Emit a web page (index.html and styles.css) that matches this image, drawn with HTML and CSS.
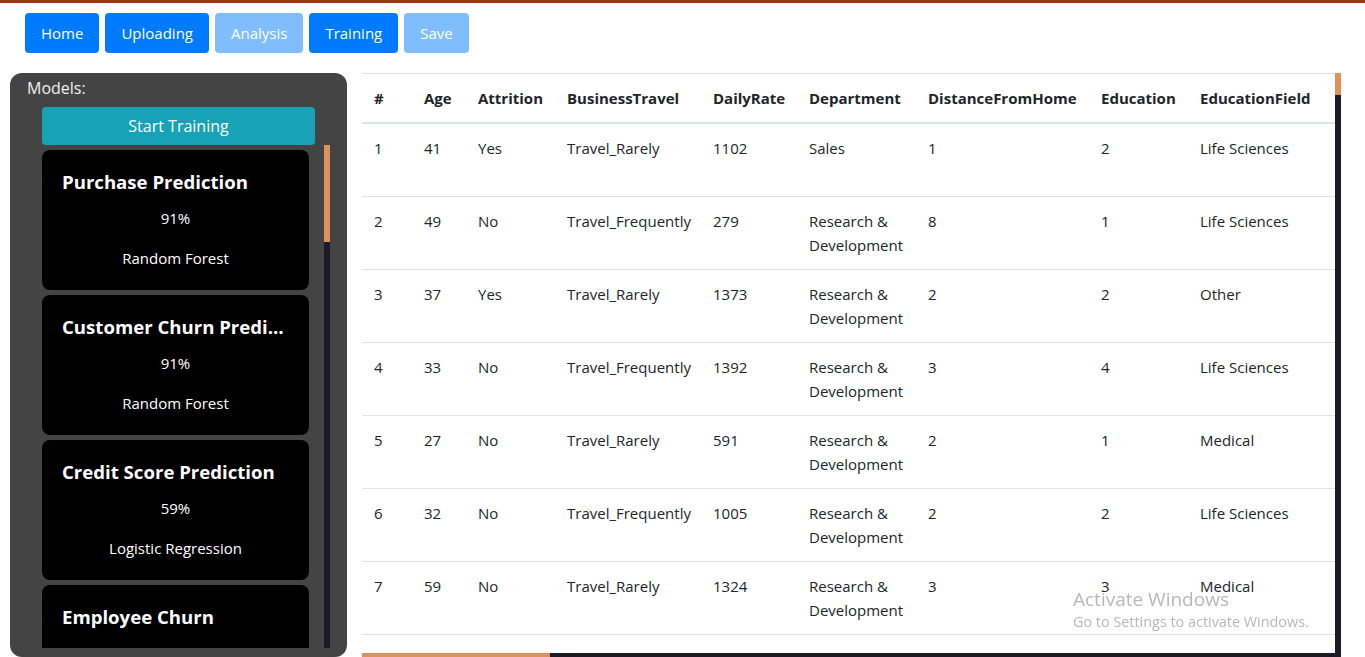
FILE: index.html
```html
<!DOCTYPE html>
<html lang="en">
<head>
<meta charset="utf-8">
<title>Training</title>
<link rel="stylesheet" href="styles.css">
</head>
<body>
<header class="topbar">
  <button class="nav-btn">Home</button>
  <button class="nav-btn">Uploading</button>
  <button class="nav-btn disabled">Analysis</button>
  <button class="nav-btn">Training</button>
  <button class="nav-btn disabled">Save</button>
</header>
<main class="main">
  <aside class="models-panel">
    <div class="models-label">Models:</div>
    <div class="models-inner">
      <button class="start-btn">Start Training</button>
      <div class="models-scroll">
        <div class="models-list">
          <div class="model-card"><h4 class="model-title">Purchase Prediction</h4><p class="model-acc">91%</p><p class="model-algo">Random Forest</p></div>
          <div class="model-card"><h4 class="model-title">Customer Churn Prediction</h4><p class="model-acc">91%</p><p class="model-algo">Random Forest</p></div>
          <div class="model-card"><h4 class="model-title">Credit Score Prediction</h4><p class="model-acc">59%</p><p class="model-algo">Logistic Regression</p></div>
          <div class="model-card"><h4 class="model-title">Employee Churn</h4><p class="model-acc">86%</p><p class="model-algo">Random Forest</p></div>
        </div>
        <div class="scroll-track v-track"><div class="scroll-thumb models-thumb"></div></div>
      </div>
    </div>
  </aside>
  <section class="table-area">
    <div class="table-viewport">
      <table class="data-table">
        <colgroup>
          <col class="w-num"><col class="w-age"><col class="w-attr"><col class="w-travel"><col class="w-rate"><col class="w-dept"><col class="w-dist"><col class="w-edu"><col class="w-field">
          <col><col><col><col><col><col><col><col class="w-role"><col><col><col><col><col><col><col><col><col><col><col><col><col><col><col><col><col><col><col><col>
        </colgroup>
        <thead>
          <tr>
            <th>#</th><th>Age</th><th>Attrition</th><th>BusinessTravel</th><th>DailyRate</th><th>Department</th><th>DistanceFromHome</th><th>Education</th><th>EducationField</th><th>EmployeeCount</th><th>EmployeeNumber</th><th>EnvironmentSatisfaction</th><th>Gender</th><th>HourlyRate</th><th>JobInvolvement</th><th>JobLevel</th><th>JobRole</th><th>JobSatisfaction</th><th>MaritalStatus</th><th>MonthlyIncome</th><th>MonthlyRate</th><th>NumCompaniesWorked</th><th>Over18</th><th>OverTime</th><th>PercentSalaryHike</th><th>PerformanceRating</th><th>RelationshipSatisfaction</th><th>StandardHours</th><th>StockOptionLevel</th><th>TotalWorkingYears</th><th>TrainingTimesLastYear</th><th>WorkLifeBalance</th><th>YearsAtCompany</th><th>YearsInCurrentRole</th><th>YearsSinceLastPromotion</th><th>YearsWithCurrManager</th>
          </tr>
        </thead>
        <tbody>
          <tr><td>1</td><td>41</td><td>Yes</td><td>Travel_Rarely</td><td>1102</td><td>Sales</td><td>1</td><td>2</td><td>Life Sciences</td><td>1</td><td>1</td><td>2</td><td>Female</td><td>94</td><td>3</td><td>2</td><td>Sales Executive</td><td>4</td><td>Single</td><td>5993</td><td>19479</td><td>8</td><td>Y</td><td>Yes</td><td>11</td><td>3</td><td>1</td><td>80</td><td>0</td><td>8</td><td>0</td><td>1</td><td>6</td><td>4</td><td>0</td><td>5</td></tr>
          <tr><td>2</td><td>49</td><td>No</td><td>Travel_Frequently</td><td>279</td><td>Research &amp; Development</td><td>8</td><td>1</td><td>Life Sciences</td><td>1</td><td>2</td><td>3</td><td>Male</td><td>61</td><td>2</td><td>2</td><td>Research Scientist</td><td>2</td><td>Married</td><td>5130</td><td>24907</td><td>1</td><td>Y</td><td>No</td><td>23</td><td>4</td><td>4</td><td>80</td><td>1</td><td>10</td><td>3</td><td>3</td><td>10</td><td>7</td><td>1</td><td>7</td></tr>
          <tr><td>3</td><td>37</td><td>Yes</td><td>Travel_Rarely</td><td>1373</td><td>Research &amp; Development</td><td>2</td><td>2</td><td>Other</td><td>1</td><td>4</td><td>4</td><td>Male</td><td>92</td><td>2</td><td>1</td><td>Laboratory Technician</td><td>3</td><td>Single</td><td>2090</td><td>2396</td><td>6</td><td>Y</td><td>Yes</td><td>15</td><td>3</td><td>2</td><td>80</td><td>0</td><td>7</td><td>3</td><td>3</td><td>0</td><td>0</td><td>0</td><td>0</td></tr>
          <tr><td>4</td><td>33</td><td>No</td><td>Travel_Frequently</td><td>1392</td><td>Research &amp; Development</td><td>3</td><td>4</td><td>Life Sciences</td><td>1</td><td>5</td><td>4</td><td>Female</td><td>56</td><td>3</td><td>1</td><td>Research Scientist</td><td>3</td><td>Married</td><td>2909</td><td>23159</td><td>1</td><td>Y</td><td>Yes</td><td>11</td><td>3</td><td>3</td><td>80</td><td>0</td><td>8</td><td>3</td><td>3</td><td>8</td><td>7</td><td>3</td><td>0</td></tr>
          <tr><td>5</td><td>27</td><td>No</td><td>Travel_Rarely</td><td>591</td><td>Research &amp; Development</td><td>2</td><td>1</td><td>Medical</td><td>1</td><td>7</td><td>1</td><td>Male</td><td>40</td><td>3</td><td>1</td><td>Laboratory Technician</td><td>2</td><td>Married</td><td>3468</td><td>16632</td><td>9</td><td>Y</td><td>No</td><td>12</td><td>3</td><td>4</td><td>80</td><td>1</td><td>6</td><td>3</td><td>3</td><td>2</td><td>2</td><td>2</td><td>2</td></tr>
          <tr><td>6</td><td>32</td><td>No</td><td>Travel_Frequently</td><td>1005</td><td>Research &amp; Development</td><td>2</td><td>2</td><td>Life Sciences</td><td>1</td><td>8</td><td>4</td><td>Male</td><td>79</td><td>3</td><td>1</td><td>Laboratory Technician</td><td>4</td><td>Single</td><td>3068</td><td>11864</td><td>0</td><td>Y</td><td>No</td><td>13</td><td>3</td><td>3</td><td>80</td><td>0</td><td>8</td><td>2</td><td>2</td><td>7</td><td>7</td><td>3</td><td>6</td></tr>
          <tr><td>7</td><td>59</td><td>No</td><td>Travel_Rarely</td><td>1324</td><td>Research &amp; Development</td><td>3</td><td>3</td><td>Medical</td><td>1</td><td>10</td><td>3</td><td>Female</td><td>81</td><td>4</td><td>1</td><td>Laboratory Technician</td><td>1</td><td>Married</td><td>2670</td><td>9964</td><td>4</td><td>Y</td><td>Yes</td><td>20</td><td>4</td><td>1</td><td>80</td><td>3</td><td>12</td><td>3</td><td>2</td><td>1</td><td>0</td><td>0</td><td>0</td></tr>
          <tr><td>8</td><td>30</td><td>No</td><td>Travel_Rarely</td><td>358</td><td>Research &amp; Development</td><td>24</td><td>1</td><td>Life Sciences</td><td>1</td><td>11</td><td>4</td><td>Male</td><td>67</td><td>3</td><td>1</td><td>Laboratory Technician</td><td>3</td><td>Divorced</td><td>2693</td><td>13335</td><td>1</td><td>Y</td><td>No</td><td>22</td><td>4</td><td>2</td><td>80</td><td>1</td><td>1</td><td>2</td><td>3</td><td>1</td><td>0</td><td>0</td><td>0</td></tr>
        </tbody>
      </table>
    </div>
    <div class="scroll-track v-track"><div class="scroll-thumb table-vthumb"></div></div>
    <div class="scroll-track h-track"><div class="scroll-thumb table-hthumb"></div></div>
    <div class="scroll-corner"></div>
  </section>
</main>
<div class="watermark">
  <div class="wm-title">Activate Windows</div>
  <div class="wm-sub">Go to Settings to activate Windows.</div>
</div>
</body>
</html>
```
FILE: styles.css
```css
* { box-sizing: border-box; }

html, body {
  margin: 0;
  height: 100%;
  overflow: hidden;
}

body {
  font-family: "Open Sans", "Noto Sans", Arial, sans-serif;
  font-size: 16px;
  line-height: 1.5;
  color: #212529;
  background: #fff;
  border-top: 3px solid #9f3410;
}

/* top navigation */
.topbar {
  display: flex;
  gap: 6px;
  padding: 10px 25px 0;
  height: 70px;
}

.nav-btn {
  font-family: inherit;
  font-size: 15px;
  line-height: 24px;
  height: 40px;
  padding: 8px 16px;
  border: 0;
  border-radius: 4px;
  background: #007bff;
  color: #fff;
}

.nav-btn.disabled {
  background: #80bdff;
}

/* main area */
.main {
  display: flex;
  gap: 15px;
  padding-left: 10px;
  padding-right: 24px;
  height: calc(100vh - 73px);
}

.models-panel {
  width: 337px;
  flex: none;
  background: #444444;
  border-radius: 12px;
  padding: 3px 17px 9px;
  display: flex;
  flex-direction: column;
  height: 584px;
}

.models-label {
  color: #f0f0f0;
  font-size: 16px;
  line-height: 24px;
}

.models-inner {
  padding-left: 15px;
  margin-top: 7px;
  flex: 1;
  min-height: 0;
  display: flex;
  flex-direction: column;
}

.start-btn {
  width: 273px;
  height: 38px;
  flex: none;
  border: 0;
  border-radius: 4px;
  background: #17a2b8;
  color: #fff;
  font-family: inherit;
  font-size: 16px;
}

.models-scroll {
  flex: 1;
  min-height: 0;
  display: flex;
  gap: 15px;
  width: 288px;
}

.models-list {
  width: 267px;
  flex: none;
  overflow: hidden;
}

.model-card {
  width: 267px;
  margin-top: 5px;
  background: #000;
  color: #fff;
  border-radius: 8px;
  padding: 20px;
  text-align: center;
}

.model-title {
  margin: 0 0 12px;
  font-size: 18.6px;
  line-height: 24px;
  font-weight: 700;
  text-align: left;
  white-space: nowrap;
  overflow: hidden;
  text-overflow: ellipsis;
}

.model-acc {
  margin: 0 0 16px;
  font-size: 15px;
  line-height: 24px;
}

.model-algo {
  margin: 0;
  font-size: 15px;
  line-height: 24px;
}

/* drawn scrollbars for the fixed scroll views */
.scroll-track {
  background: #1c1a27;
}

.v-track {
  width: 6px;
  flex: none;
}

.scroll-thumb {
  background: #de915b;
}

.models-thumb {
  height: 97px;
}

/* table */
.table-area {
  flex: 1;
  min-width: 0;
  height: 584px;
  display: grid;
  grid-template-columns: 1fr 6px;
  grid-template-rows: 1fr 4px;
}

.table-viewport {
  overflow: hidden;
  min-width: 0;
  min-height: 0;
}

.table-vthumb {
  height: 22px;
}

.h-track {
  height: 4px;
}

.table-hthumb {
  width: 188px;
  height: 4px;
}

.scroll-corner {
  background: #1c1a27;
}

.data-table {
  table-layout: fixed;
  width: 5040px;
  border-collapse: collapse;
  font-size: 15px;
}

.data-table th,
.data-table td {
  padding: 12px;
  line-height: 24px;
  text-align: left;
  vertical-align: top;
  border-top: 1px solid #dee2e6;
}

.data-table th {
  font-weight: 700;
  border-bottom: 2px solid #dee2e6;
  white-space: nowrap;
}

.w-num { width: 50px; }
.w-age { width: 54px; }
.w-attr { width: 89px; }
.w-travel { width: 146px; }
.w-rate { width: 96px; }
.w-dept { width: 119px; }
.w-dist { width: 173px; }
.w-edu { width: 99px; }
.w-field { width: 135px; }
.w-role { width: 110px; }

/* OS watermark */
.watermark {
  position: fixed;
  left: 1073px;
  top: 586px;
  color: #b8b8b8;
  font-family: "Open Sans", "Noto Sans", Arial, sans-serif;
  pointer-events: none;
}

.wm-title {
  font-size: 19px;
  line-height: 26px;
}

.wm-sub {
  font-size: 14.4px;
  line-height: 20px;
}
```
